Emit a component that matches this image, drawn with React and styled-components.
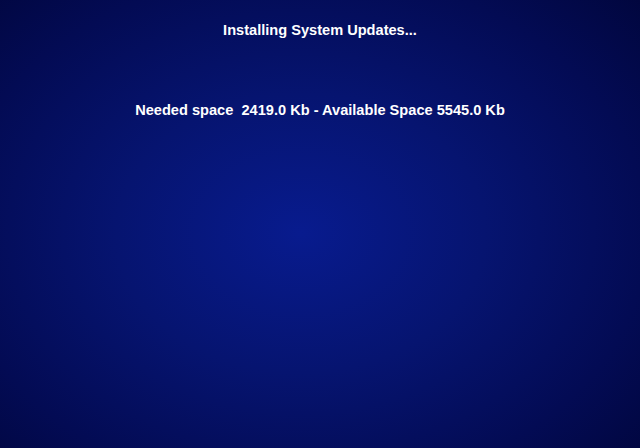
import React from 'react';
import styled, { createGlobalStyle } from 'styled-components';

const GlobalStyle = createGlobalStyle`
    html, body {
        margin: 0;
        padding: 0;
        width: 100%;
        height: 100%;
        overflow: hidden;
    }
    #root {
        height: 100%;
    }
`;

export const Screen = styled.main`
    width: 100%;
    height: 100%;
    box-sizing: border-box;
    display: flex;
    flex-direction: column;
    align-items: center;
    padding-top: 22px;
    background: radial-gradient(
        ellipse 72% 78% at 47% 52%,
        #081b8e 0%,
        #061470 40%,
        #030b54 75%,
        #01063e 100%
    );
    font-family: "Liberation Sans", Arial, sans-serif;
    color: #ffffff;
`;

export const Line = styled.p`
    margin: 0 0 ${(p) => p.gap || 0}px;
    font-size: 14.6px;
    font-weight: bold;
    line-height: 17px;
    white-space: pre;
`;

const App = () => {
    return (
        <>
            <GlobalStyle />
            <Screen>
                <Line gap={63}>Installing System Updates...</Line>
                <Line>Needed space  2419.0 Kb - Available Space 5545.0 Kb</Line>
            </Screen>
        </>
    );
};

export default App;
